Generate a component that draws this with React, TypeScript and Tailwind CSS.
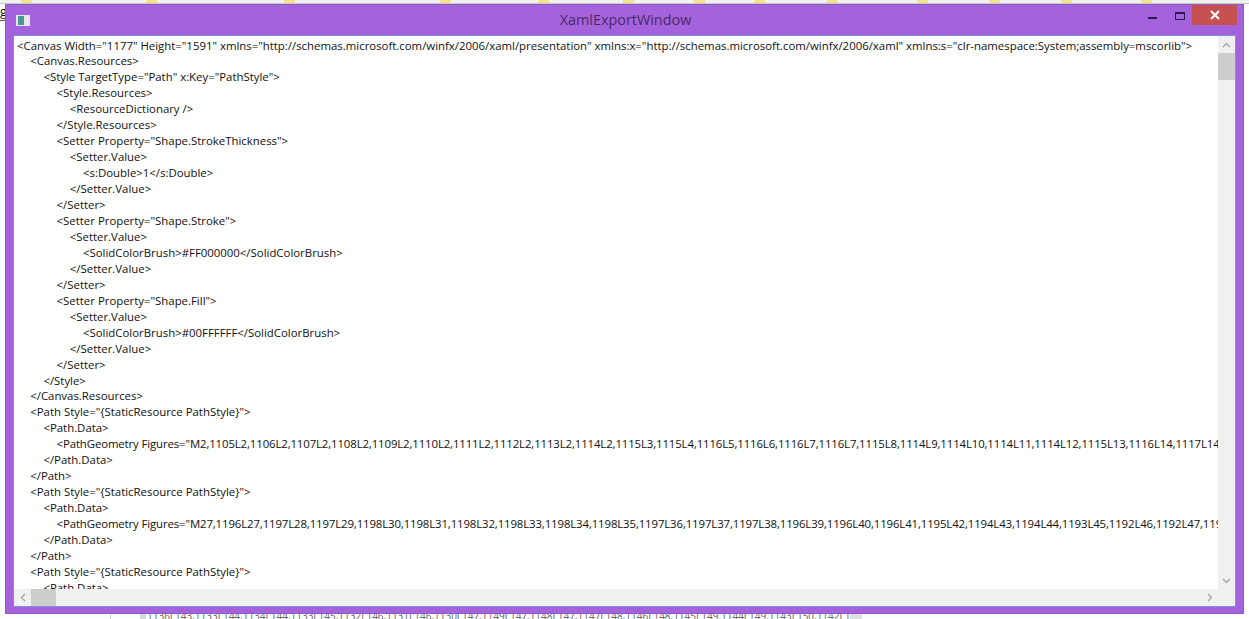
const lines: [number, string][] = [
  [0, '<Canvas Width="1177" Height="1591" xmlns="http://schemas.microsoft.com/winfx/2006/xaml/presentation" xmlns:x="http://schemas.microsoft.com/winfx/2006/xaml" xmlns:s="clr-namespace:System;assembly=mscorlib">'],
  [1, '<Canvas.Resources>'],
  [2, '<Style TargetType="Path" x:Key="PathStyle">'],
  [3, '<Style.Resources>'],
  [4, '<ResourceDictionary />'],
  [3, '</Style.Resources>'],
  [3, '<Setter Property="Shape.StrokeThickness">'],
  [4, '<Setter.Value>'],
  [5, '<s:Double>1</s:Double>'],
  [4, '</Setter.Value>'],
  [3, '</Setter>'],
  [3, '<Setter Property="Shape.Stroke">'],
  [4, '<Setter.Value>'],
  [5, '<SolidColorBrush>#FF000000</SolidColorBrush>'],
  [4, '</Setter.Value>'],
  [3, '</Setter>'],
  [3, '<Setter Property="Shape.Fill">'],
  [4, '<Setter.Value>'],
  [5, '<SolidColorBrush>#00FFFFFF</SolidColorBrush>'],
  [4, '</Setter.Value>'],
  [3, '</Setter>'],
  [2, '</Style>'],
  [1, '</Canvas.Resources>'],
  [1, '<Path Style="{StaticResource PathStyle}">'],
  [2, '<Path.Data>'],
  [3, '<PathGeometry Figures="M2,1105L2,1106L2,1107L2,1108L2,1109L2,1110L2,1111L2,1112L2,1113L2,1114L2,1115L3,1115L4,1116L5,1116L6,1116L7,1116L7,1115L8,1114L9,1114L10,1114L11,1114L12,1115L13,1116L14,1117L14,1118L15,1119'],
  [2, '</Path.Data>'],
  [1, '</Path>'],
  [1, '<Path Style="{StaticResource PathStyle}">'],
  [2, '<Path.Data>'],
  [3, '<PathGeometry Figures="M27,1196L27,1197L28,1197L29,1198L30,1198L31,1198L32,1198L33,1198L34,1198L35,1197L36,1197L37,1197L38,1196L39,1196L40,1196L41,1195L42,1194L43,1194L44,1193L45,1192L46,1192L47,1191L48,1190'],
  [2, '</Path.Data>'],
  [1, '</Path>'],
  [1, '<Path Style="{StaticResource PathStyle}">'],
  [2, '<Path.Data>'],
];

const tabs = ['ml-[21px]', 'ml-[114px]', 'ml-[127px]', 'ml-[145px]', 'ml-[87px]', 'ml-[74px]', 'ml-[60px]', 'ml-[49px]', 'ml-[62px]', 'ml-[79px]', 'ml-[61px]', 'ml-[61px]', 'ml-[69px]'];

export default function App() {
  return (
    <div className="relative h-[619px] w-[1249px] overflow-hidden bg-white font-['Open_Sans','Noto_Sans',sans-serif] text-[11.4px] text-[#111111]">
      <div className="flex h-[4px] border-b border-[#c8c8c8] bg-[#f1f1f1]">
        {tabs.map((t, i) => (
          <div key={i} className={`${t} h-[3px] w-[11px] bg-[#f5e28a]`} />
        ))}
      </div>
      <div className="absolute left-0 top-[4px] h-[17px] w-[5px] overflow-hidden border-b border-[#555555] text-[13px] leading-[14px]">g</div>
      <div className="mx-[5px] flex h-[610px] flex-col border border-[#8a5cc4] bg-[#a463dd]">
        <div className="flex h-[30px] shrink-0 items-center pl-[10px]">
          <div className="flex h-[11px] w-[14px] bg-[#e6e6ee]">
            <div className="my-px ml-[2px] w-[6px] bg-[#4a9a90]" />
          </div>
          <div className="flex-1 pl-[73px] text-center text-[14.4px] text-[#4a2a66]">XamlExportWindow</div>
          <div className="mb-[16px] h-[2px] w-[9px] self-end bg-[#2a1a50]" />
          <div className="ml-[18px] mb-[15px] h-[8px] w-[10px] self-end border border-t-2 border-[#2a1a50]" />
          <div className="ml-[7px] mr-[6px] flex h-[20px] w-[45px] items-center justify-center self-start bg-[#c75050] text-white">
            <svg width="10" height="10" viewBox="0 0 10 10"><path d="M1 1L9 9M9 1L1 9" stroke="#fff" strokeWidth="2" /></svg>
          </div>
        </div>
        <div className="mx-[7px] mb-[6px] flex min-h-0 flex-1 flex-col border border-[#7d8fd8] bg-[#f0f0f0]">
          <div className="flex min-h-0 flex-1">
            <div className="min-w-0 flex-1 overflow-hidden whitespace-pre bg-white pl-[3px] pt-[1.5px] leading-[15.96px]">
              {lines.map(([indent, text], i) => (
                <div key={i} className={text.startsWith('<PathGeometry') ? 'h-[15.96px] tracking-[-0.12px]' : 'h-[15.96px]'} style={{ paddingLeft: indent * 13.2 }}>{text}</div>
              ))}
            </div>
            <div className="flex w-[17px] shrink-0 flex-col bg-[#f0f0f0]">
              <div className="flex h-[17px] items-center justify-center">
                <svg width="9" height="6" viewBox="0 0 9 6"><path d="M1 5L4.5 1.5L8 5" fill="none" stroke="#a0a0a0" strokeWidth="1.2" /></svg>
              </div>
              <div className="h-[27px] bg-[#cdcdcd]" />
              <div className="flex-1" />
              <div className="flex h-[17px] items-center justify-center">
                <svg width="9" height="6" viewBox="0 0 9 6"><path d="M1 1L4.5 4.5L8 1" fill="none" stroke="#a0a0a0" strokeWidth="1.2" /></svg>
              </div>
            </div>
          </div>
          <div className="flex h-[17px] shrink-0 items-center bg-[#f0f0f0]">
            <div className="flex w-[17px] justify-center">
              <svg width="6" height="9" viewBox="0 0 6 9"><path d="M5 1L1.5 4.5L5 8" fill="none" stroke="#a0a0a0" strokeWidth="1.2" /></svg>
            </div>
            <div className="h-full w-[25px] bg-[#cdcdcd]" />
            <div className="flex-1" />
            <div className="mr-[17px] flex w-[17px] justify-center">
              <svg width="6" height="9" viewBox="0 0 6 9"><path d="M1 1L4.5 4.5L1 8" fill="none" stroke="#a0a0a0" strokeWidth="1.2" /></svg>
            </div>
          </div>
        </div>
      </div>
      <div className="flex h-[5px] overflow-hidden pl-[110px]">
        <div className="h-full w-px bg-[#d0d0d0]" />
        <div className="ml-[29px] h-full w-[6px] bg-[#d8d8d8]" />
        <div className="ml-px w-[703px] overflow-hidden whitespace-pre text-[10px] leading-[5px] text-[#666666]">1136L143,1133L144,1134L144,1133L145,1132L146,1131L146,1130L147,1149L147,1148L147,1147L148,1146L148,1145L149,1144L149,1143L150,1142L151,1141L152,1140L153,1140L154,1139L155,1138L156,1138L157</div>
        <div className="h-full w-[12px] bg-[#e0e0e0]" />
      </div>
    </div>
  );
}
